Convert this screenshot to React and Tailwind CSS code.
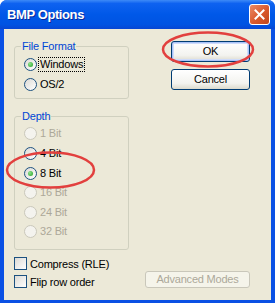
import React from 'react';

const font = { fontFamily: '"Liberation Sans", Arial, sans-serif' };

const Radio = ({ label, checked, disabled, focused }) => (
  <div className="flex h-[19.6px] items-center">
    <span
      className={`relative flex h-[13px] w-[13px] shrink-0 items-center justify-center rounded-full border ${
        disabled
          ? 'border-[#cac8bb] bg-[#f4f3ee]'
          : 'border-[#1c5180] bg-[linear-gradient(135deg,#dcdad5,#ffffff)]'
      }`}
    >
      {checked && (
        <span className="h-[5px] w-[5px] rounded-full bg-[radial-gradient(circle_at_35%_35%,#8ee28e,#21a121)]" />
      )}
    </span>
    <span
      className={`ml-[2px] px-[1px] leading-[13px] ${
        focused ? 'outline outline-1 outline-dotted outline-black' : ''
      } ${disabled ? 'text-[#aca899]' : 'text-black'}`}
    >
      {label}
    </span>
  </div>
);

const Check = ({ label }) => (
  <div className="flex h-[18px] items-center">
    <span className="h-[13px] w-[13px] shrink-0 border border-[#1c5180] bg-[linear-gradient(135deg,#dcdad5,#ffffff)]" />
    <span className="ml-[3px] text-black">{label}</span>
  </div>
);

const Group = ({ title, children, className = '' }) => (
  <fieldset className={`rounded-[3px] border border-[#d0d0bf] px-[6px] ${className}`}>
    <legend className="px-[1px] leading-[13px] text-[#0046d5]">{title}</legend>
    <div className="pl-[3px]">{children}</div>
  </fieldset>
);

const XpButton = ({ children, isDefault, disabled, className = '' }) => (
  <button
    className={`flex items-center justify-center rounded-[3px] border leading-none ${
      disabled
        ? 'border-[#c9c7ba] bg-[#f5f4ea] text-[#aca899]'
        : 'border-[#003c74] bg-[linear-gradient(#ffffff,#f3f3ef_70%,#dcdacd)] text-black'
    } ${isDefault ? 'shadow-[inset_0_0_0_1px_#a9c2f7,inset_0_0_0_2px_#cfdcfb]' : ''} ${className}`}
  >
    {children}
  </button>
);

export default function App() {
  return (
    <div
      className="relative flex h-[303px] w-[275px] flex-col overflow-hidden rounded-t-[7px] bg-[#0a50e4] text-[11px] tracking-[-0.2px]"
      style={font}
    >
      {/* title bar */}
      <div className="flex h-[29px] shrink-0 items-center bg-[linear-gradient(#3d8af7,#0e62f0_12%,#0058e8_50%,#0053e2_85%,#0846d3)] pl-[7px] pr-[5px]">
        <span className="mt-[1px] flex-1 text-[13px] font-bold tracking-[-0.4px] text-white [text-shadow:1px_1px_#0a2a9a]">
          BMP Options
        </span>
        <span className="flex h-[21px] w-[21px] items-center justify-center rounded-[3px] border border-white bg-[linear-gradient(135deg,#ea8a66,#d9582c_55%,#c0461c)]">
          <svg width="11" height="11" viewBox="0 0 11 11">
            <path d="M1.5 1.5 L9.5 9.5 M9.5 1.5 L1.5 9.5" stroke="#fff" strokeWidth="2" strokeLinecap="square" />
          </svg>
        </span>
      </div>

      {/* body */}
      <div className="mx-[4px] mb-[3px] flex flex-1 bg-[#ece9d8] pt-[11px] pb-[8px]">
        <div className="ml-[10px] flex w-[115px] flex-col">
          <Group title="File Format" className="pb-[4px]">
            <div className="pt-[2px]">
              <Radio label="Windows" checked focused />
              <Radio label="OS/2" />
            </div>
          </Group>

          <Group title="Depth" className="mt-[11px] pb-[7px]">
            <div className="pt-[1px]">
              <Radio label="1 Bit" disabled />
              <Radio label="4 Bit" />
              <Radio label="8 Bit" checked />
              <Radio label="16 Bit" disabled />
              <Radio label="24 Bit" disabled />
              <Radio label="32 Bit" disabled />
            </div>
          </Group>

          <div className="mt-[5px]">
            <Check label="Compress (RLE)" />
            <Check label="Flip row order" />
          </div>
        </div>

        <div className="flex flex-1 flex-col items-end pr-[21px] pb-[4px]">
          <XpButton isDefault className="mt-[1px] h-[21px] w-[79px]">OK</XpButton>
          <XpButton className="mt-[7px] h-[21px] w-[79px]">Cancel</XpButton>
          <XpButton disabled className="mt-auto h-[17px] w-[105px]">Advanced Modes</XpButton>
        </div>
      </div>

      {/* red annotation marks */}
      <svg className="pointer-events-none absolute left-0 top-0" width="275" height="303">
        <ellipse cx="208" cy="49.5" rx="45" ry="17" fill="none" stroke="#e2403e" strokeWidth="2.5" />
        <ellipse cx="50.5" cy="170" rx="43.5" ry="17.5" fill="none" stroke="#e2403e" strokeWidth="2.5" />
      </svg>
    </div>
  );
}
